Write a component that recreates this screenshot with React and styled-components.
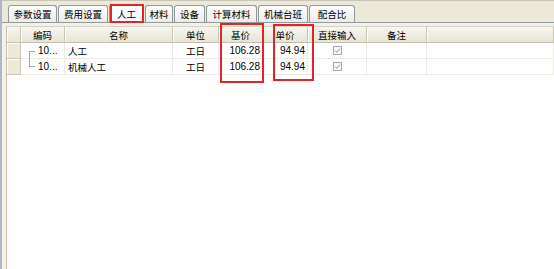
import React from "react";
import styled, { createGlobalStyle } from "styled-components";

const GlobalStyle = createGlobalStyle`
  html, body {
    margin: 0;
    padding: 0;
    background: #ffffff;
    overflow: hidden;
  }
`;

const Window = styled.div`
  position: relative;
  width: 554px;
  height: 269px;
  display: flex;
  flex-direction: column;
  background: #ece9d8;
  border-left: 2px solid #aeb7c9;
  box-sizing: border-box;
  overflow: hidden;
  font-family: "Noto Sans CJK SC", "Liberation Sans", sans-serif;
  font-size: 9.5px;
  color: #000;
`;

const TabStrip = styled.div`
  height: 22px;
  display: flex;
  align-items: flex-end;
  padding-left: 6px;
  gap: 1px;
  box-sizing: border-box;
  border-top: 1px solid #c9c7ba;
`;

const Tab = styled.div`
  width: ${(p) => p.w}px;
  height: ${(p) => (p.active ? 19 : 17)}px;
  box-sizing: border-box;
  display: flex;
  align-items: center;
  justify-content: center;
  border: 1px solid #919b9c;
  border-bottom: none;
  border-radius: 3px 3px 0 0;
  background: ${(p) =>
    p.active ? "#fcfcfe" : "linear-gradient(#fefefe, #ecebe6)"};
  margin-bottom: ${(p) => (p.active ? -1 : 0)}px;
  position: relative;
  z-index: ${(p) => (p.active ? 1 : 0)};
  white-space: nowrap;
`;

const Panel = styled.div`
  flex: 1;
  display: flex;
  flex-direction: column;
  border-top: 1px solid #919b9c;
  padding: 3px 0 0 4px;
  background: #f2f1ea;
`;

const Grid = styled.div`
  flex: 1;
  display: flex;
  flex-direction: column;
  background: #ffffff;
  border-left: 1px solid #cdb9a9;
`;

const cols = "14px 44px 108px 46px 44px 45px 59px 60px 1fr";

const HeaderRow = styled.div`
  display: grid;
  grid-template-columns: ${cols};
  height: 17px;
  box-sizing: border-box;
  background: linear-gradient(#f7f6f0, #e8e5d6);
  border-top: 1px solid #d6d3c4;
  border-bottom: 1px solid #c2bfae;
`;

const HeadCell = styled.div`
  display: flex;
  align-items: center;
  justify-content: center;
  border-right: 1px solid #c9c6b5;
  box-shadow: inset 1px 0 0 #ffffff;
  white-space: nowrap;
`;

const Row = styled.div`
  display: grid;
  grid-template-columns: ${cols};
  height: 16px;
  box-sizing: border-box;
  border-bottom: 1px solid #ecebe6;
`;

const RowHead = styled.div`
  background: #ece9d8;
  border-right: 1px solid #c9c6b5;
  border-bottom: 1px solid #c9c6b5;
  box-shadow: inset 1px 1px 0 #ffffff;
  margin-bottom: -1px;
`;

const Cell = styled.div`
  display: flex;
  align-items: center;
  justify-content: ${(p) =>
    p.align === "right" ? "flex-end" : p.align === "center" ? "center" : "flex-start"};
  padding: 0 ${(p) => (p.align === "right" ? 2 : 3)}px;
  border-right: 1px solid #ecebe6;
  white-space: nowrap;
  font-family: ${(p) =>
    p.num ? '"Liberation Sans", sans-serif' : '"Noto Sans CJK SC", sans-serif'};
  font-size: ${(p) => (p.num ? 10 : 9.5)}px;
  position: relative;
`;

const CodeCell = styled(Cell)`
  padding-left: 17px;
`;

const TreeLine = styled.span`
  position: absolute;
  left: 8px;
  width: 5px;
  border-left: 1px solid #a8a8a8;
  ${(p) =>
    p.first
      ? "top: 8px; height: 8px; border-top: 1px solid #a8a8a8;"
      : "top: -1px; height: 8px; border-bottom: 1px solid #a8a8a8;"}
`;

const Check = styled.span`
  width: 9px;
  height: 9px;
  box-sizing: border-box;
  border: 1px solid #a9a9a9;
  background: #f7f7f4;
  display: flex;
  align-items: center;
  justify-content: center;
`;

const Mark = styled.div`
  position: absolute;
  border: 2px solid #e2232a;
  box-sizing: border-box;
  left: ${(p) => p.x}px;
  top: ${(p) => p.y}px;
  width: ${(p) => p.w}px;
  height: ${(p) => p.h}px;
  pointer-events: none;
  z-index: 5;
`;

const tabs = [
  { label: "参数设置", w: 49 },
  { label: "费用设置", w: 50 },
  { label: "人工", w: 35, active: true },
  { label: "材料", w: 28 },
  { label: "设备", w: 31 },
  { label: "计算材料", w: 51 },
  { label: "机械台班", w: 50 },
  { label: "配合比", w: 46 },
];

const heads = ["", "编码", "名称", "单位", "基价", "单价", "直接输入", "备注", ""];

const rows = [
  { code: "10...", name: "人工", unit: "工日", base: "106.28", price: "94.94" },
  { code: "10...", name: "机械人工", unit: "工日", base: "106.28", price: "94.94" },
];

const CheckIcon = () => (
  <svg width="7" height="7" viewBox="0 0 7 7">
    <path d="M1 3.5 L2.8 5.3 L6 1.5" fill="none" stroke="#9a9a9a" strokeWidth="1" />
  </svg>
);

export default function App() {
  return (
    <>
      <GlobalStyle />
      <Window>
        <TabStrip>
          {tabs.map((t) => (
            <Tab key={t.label} w={t.w} active={t.active}>
              {t.label}
            </Tab>
          ))}
        </TabStrip>
        <Panel>
          <Grid>
            <HeaderRow>
              {heads.map((h, i) => (
                <HeadCell key={i}>{h}</HeadCell>
              ))}
            </HeaderRow>
            {rows.map((r, i) => (
              <Row key={i}>
                <RowHead />
                <CodeCell num>
                  <TreeLine first={i === 0} />
                  {r.code}
                </CodeCell>
                <Cell>{r.name}</Cell>
                <Cell align="center">{r.unit}</Cell>
                <Cell num align="right">{r.base}</Cell>
                <Cell num align="right">{r.price}</Cell>
                <Cell align="center">
                  <Check>
                    <CheckIcon />
                  </Check>
                </Cell>
                <Cell />
                <Cell />
              </Row>
            ))}
          </Grid>
        </Panel>
        <Mark x={108} y={4} w={34} h={19} />
        <Mark x={218} y={23} w={44} h={60} />
        <Mark x={271} y={24} w={41} h={57} />
      </Window>
    </>
  );
}
